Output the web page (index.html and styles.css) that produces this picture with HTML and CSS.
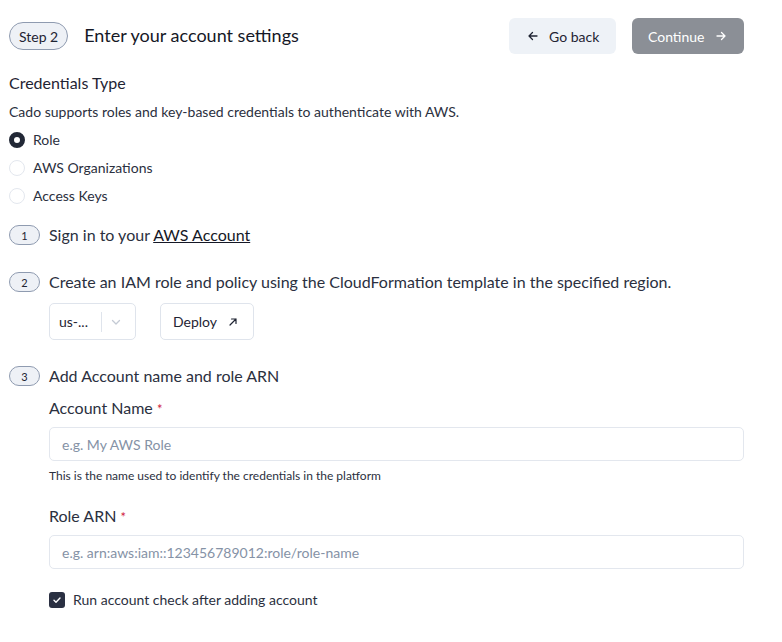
FILE: index.html
```html
<!DOCTYPE html>
<html>
<head>
<meta charset="utf-8">
<link rel="stylesheet" href="styles.css">
</head>
<body>
<div class="page">
  <header class="header">
    <div class="header-left">
      <span class="step-pill">Step 2</span>
      <h1 class="title">Enter your account settings</h1>
    </div>
    <div class="header-actions">
      <button class="btn btn-back">
        <svg class="ico" width="12" height="12" viewBox="0 0 12 12"><path d="M10 6H2M5.5 2.5L2 6l3.5 3.5" fill="none" stroke="currentColor" stroke-width="1.3" stroke-linecap="round" stroke-linejoin="round"/></svg>
        <span>Go back</span>
      </button>
      <button class="btn btn-continue">
        <span>Continue</span>
        <svg class="ico" width="12" height="12" viewBox="0 0 12 12"><path d="M2 6h8M6.5 2.5L10 6 6.5 9.5" fill="none" stroke="currentColor" stroke-width="1.3" stroke-linecap="round" stroke-linejoin="round"/></svg>
      </button>
    </div>
  </header>

  <section class="creds">
    <h2 class="section-title">Credentials Type</h2>
    <p class="desc">Cado supports roles and key-based credentials to authenticate with AWS.</p>
    <div class="radios">
      <label class="radio"><span class="radio-dot checked"></span><span>Role</span></label>
      <label class="radio"><span class="radio-dot"></span><span>AWS Organizations</span></label>
      <label class="radio"><span class="radio-dot"></span><span>Access Keys</span></label>
    </div>
  </section>

  <section class="steps">
    <div class="step">
      <div class="step-head"><span class="num-pill">1</span><span class="step-text">Sign in to your <a class="link">AWS Account</a></span></div>
    </div>
    <div class="step">
      <div class="step-head"><span class="num-pill">2</span><span class="step-text">Create an IAM role and policy using the CloudFormation template in the specified region.</span></div>
      <div class="step-body row">
        <div class="select">
          <span class="select-value">us-...</span>
          <span class="select-sep"></span>
          <svg class="chev" width="12" height="12" viewBox="0 0 12 12"><path d="M2.5 4.5L6 8l3.5-3.5" fill="none" stroke="#c4cad4" stroke-width="1.3" stroke-linecap="round" stroke-linejoin="round"/></svg>
        </div>
        <button class="btn-deploy">
          <span>Deploy</span>
          <svg width="10" height="10" viewBox="0 0 10 10"><path d="M2 8L8 2M3.5 2H8v4.5" fill="none" stroke="#1f2433" stroke-width="1.2" stroke-linecap="round" stroke-linejoin="round"/></svg>
        </button>
      </div>
    </div>
    <div class="step">
      <div class="step-head"><span class="num-pill">3</span><span class="step-text">Add Account name and role ARN</span></div>
      <div class="step-body fields">
        <div class="field">
          <label class="field-label">Account Name <span class="req">*</span></label>
          <input class="input" type="text" placeholder="e.g. My AWS Role">
          <p class="help">This is the name used to identify the credentials in the platform</p>
        </div>
        <div class="field field-arn">
          <label class="field-label">Role ARN <span class="req">*</span></label>
          <input class="input" type="text" placeholder="e.g. arn:aws:iam::123456789012:role/role-name">
        </div>
        <label class="check">
          <span class="check-box"><svg width="10" height="10" viewBox="0 0 10 10"><path d="M2 5.2l2 2L8 3" fill="none" stroke="#fff" stroke-width="1.4" stroke-linecap="round" stroke-linejoin="round"/></svg></span>
          <span>Run account check after adding account</span>
        </label>
      </div>
    </div>
  </section>
</div>
</body>
</html>
```

FILE: styles.css
```css
* { box-sizing: border-box; }
html, body { margin: 0; padding: 0; background: #fff; }
body {
  font-family: "Lato", "Liberation Sans", sans-serif;
  color: #1f2433;
}
.page {
  width: 782px;
  padding: 18px 38px 0 9px;
}
.header {
  display: flex;
  justify-content: space-between;
  align-items: center;
  height: 36px;
}
.header-left { display: flex; align-items: center; gap: 16px; }
.step-pill {
  display: inline-flex;
  align-items: center;
  justify-content: center;
  height: 28px;
  padding: 0 9px;
  border: 1px solid #8f9bb0;
  background: #eef1f6;
  border-radius: 14px;
  font-size: 14px;
  color: #1f2433;
}
.title {
  margin: 0 0 2px;
  font-size: 18px;
  font-weight: 400;
  line-height: 24px;
  color: #151826;
}
.header-actions { display: flex; gap: 16px; }
.btn {
  height: 36px;
  border: none;
  border-radius: 6px;
  font-family: inherit;
  font-size: 14px;
  display: inline-flex;
  align-items: center;
  gap: 10px;
}
.btn-back {
  width: 107px;
  background: #eef2f7;
  color: #1f2433;
  padding: 0 0 0 18px;
}
.btn-continue {
  width: 112px;
  background: #8b8f96;
  color: #fff;
  padding: 0 0 0 16px;
}
.creds { margin-top: 18px; }
.section-title {
  margin: 0;
  font-size: 16px;
  font-weight: 400;
  line-height: 22px;
}
.desc {
  margin: 9px 0 0;
  font-size: 14px;
  line-height: 18px;
  color: #2b3040;
}
.radios {
  margin-top: 9px;
  display: flex;
  flex-direction: column;
  gap: 8px;
}
.radio {
  display: flex;
  align-items: center;
  gap: 8px;
  font-size: 14px;
  line-height: 20px;
  color: #2b3040;
}
.radio-dot {
  width: 16px;
  height: 16px;
  border-radius: 50%;
  border: 1px solid #e3e7ee;
  background: #fff;
  display: inline-block;
}
.radio-dot.checked {
  border: 5px solid #222836;
  background: #fff;
}
.steps { margin-top: 18px; }
.step { margin-bottom: 25px; }
.step-head {
  display: flex;
  align-items: center;
  gap: 9px;
  height: 22px;
}
.num-pill {
  width: 31px;
  height: 20px;
  border: 1px solid #8f9bb0;
  background: #eef1f6;
  border-radius: 10px;
  font-size: 11px;
  display: inline-flex;
  align-items: center;
  justify-content: center;
  color: #1f2433;
}
.step-text {
  font-size: 16px;
  line-height: 22px;
  color: #2b3040;
}
.link { color: #151826; text-decoration: underline; }
.step-body { margin-left: 40px; }
.row {
  display: flex;
  gap: 24px;
  margin-top: 10px;
}
.select {
  width: 87px;
  height: 37px;
  border: 1px solid #dfe4ec;
  border-radius: 5px;
  display: flex;
  align-items: center;
  padding-left: 9px;
}
.select-value { font-size: 14px; width: 42px; }
.select-sep {
  width: 1px;
  height: 20px;
  background: #dfe4ec;
  margin-right: 8px;
}
.btn-deploy {
  width: 94px;
  height: 37px;
  border: 1px solid #dfe4ec;
  border-radius: 5px;
  background: #fff;
  font-family: inherit;
  font-size: 14px;
  color: #1f2433;
  display: inline-flex;
  align-items: center;
  gap: 11px;
  padding: 0 0 0 12px;
}
.fields { margin-top: 10px; }
.field { display: flex; flex-direction: column; }
.field-label {
  font-size: 16px;
  line-height: 22px;
  color: #2b3040;
}
.req { color: #d0213d; font-size: 13px; }
.input {
  margin-top: 7px;
  width: 695px;
  height: 34px;
  border: 1px solid #e3e7ee;
  border-radius: 5px;
  padding: 0 12px;
  font-family: inherit;
  font-size: 14px;
  outline: none;
}
.input::placeholder { color: #8592a6; }
.help {
  margin: 7px 0 0;
  font-size: 12px;
  line-height: 16px;
  color: #2b3040;
}
.field-arn { margin-top: 21px; }
.check {
  margin-top: 22px;
  display: flex;
  align-items: center;
  gap: 8px;
  font-size: 14px;
  color: #2b3040;
}
.check-box {
  width: 16px;
  height: 16px;
  border-radius: 3px;
  background: #2a3042;
  display: inline-flex;
  align-items: center;
  justify-content: center;
}
```
